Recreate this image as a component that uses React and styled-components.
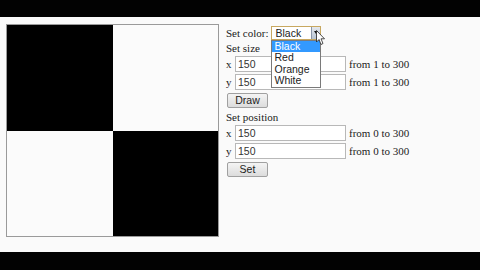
import React from 'react';
import styled, { createGlobalStyle } from 'styled-components';

const GlobalStyle = createGlobalStyle`
  html, body {
    margin: 0;
    padding: 0;
    background: #000;
  }
`;

const Page = styled.div`
  width: 480px;
  height: 270px;
  display: flex;
  flex-direction: column;
  overflow: hidden;
`;

const Bar = styled.div`
  height: ${p => p.h}px;
  background: #020202;
  flex-shrink: 0;
`;

const Content = styled.div`
  flex: 1;
  background: #fafafa;
  display: flex;
  align-items: flex-start;
  gap: 7px;
  padding: 7px 6px 0;
`;

const Canvas = styled.div`
  width: 211px;
  height: 211px;
  border: 1px solid #9a9a9a;
  display: grid;
  grid-template-columns: 106px 105px;
  grid-template-rows: 106px 105px;
  background: #fbfbfb;
`;

const Cell = styled.div`
  background: ${p => (p.dark ? '#000' : '#fbfbfb')};
`;

const Panel = styled.div`
  display: flex;
  flex-direction: column;
  font-family: "Liberation Serif", serif;
  font-size: 11px;
  color: #1a1a1a;
`;

const Row = styled.div`
  height: ${p => p.h}px;
  display: flex;
  align-items: center;
  position: relative;
`;

const Label = styled.span`
  width: ${p => (p.w ? `${p.w}px` : 'auto')};
  white-space: nowrap;
`;

const SelectBox = styled.div`
  position: relative;
  margin-left: 3px;
  width: 48px;
  height: 12px;
  border: 1px solid #c8a860;
  background: #fff;
  font-family: "Liberation Sans", Arial, sans-serif;
  font-size: 10.5px;
  line-height: 12px;
  color: #222;
`;

const SelectText = styled.span`
  padding-left: 3px;
`;

const Arrow = styled.div`
  position: absolute;
  right: 0;
  top: 0;
  width: 8px;
  height: 12px;
  background: linear-gradient(#e4e8ee, #b8c4d2);
  border-left: 1px solid #8a96a8;
  display: flex;
  align-items: center;
  justify-content: center;
  &::after {
    content: '';
    border-left: 2.5px solid transparent;
    border-right: 2.5px solid transparent;
    border-top: 3px solid #111;
  }
`;

const DropList = styled.div`
  position: absolute;
  left: -1px;
  top: 13px;
  width: 48px;
  border: 1px solid #7a7a7a;
  background: #fff;
  display: flex;
  flex-direction: column;
  z-index: 2;
`;

const Option = styled.div`
  height: 11.5px;
  line-height: 11.5px;
  padding-left: 2px;
  background: ${p => (p.active ? '#3399ff' : '#fff')};
  color: ${p => (p.active ? '#fff' : '#222')};
`;

const TextInput = styled.div`
  width: 107px;
  height: 14px;
  border: 1px solid #b8b8b8;
  background: #fff;
  font-family: "Liberation Sans", Arial, sans-serif;
  font-size: 10.5px;
  line-height: 14px;
  padding-left: 2px;
  color: #333;
  box-sizing: content-box;
`;

const Hint = styled.span`
  margin-left: 3px;
  white-space: nowrap;
`;

const Button = styled.div`
  margin-left: 1px;
  width: 39px;
  height: 13px;
  border: 1px solid #a0a0a0;
  border-radius: 2px;
  background: linear-gradient(#f4f4f4, #dcdcdc);
  font-family: "Liberation Sans", Arial, sans-serif;
  font-size: 10.5px;
  line-height: 13px;
  text-align: center;
  color: #222;
`;

const Cursor = styled.svg`
  position: absolute;
  left: 44px;
  top: 3px;
  z-index: 3;
`;

const InputRow = ({ axis, range }) => (
  <Row h={18}>
    <Label w={9}>{axis}</Label>
    <TextInput>150</TextInput>
    <Hint>from {range} to 300</Hint>
  </Row>
);

export default function App() {
  return (
    <Page>
      <GlobalStyle />
      <Bar h={17} />
      <Content>
        <Canvas>
          <Cell dark />
          <Cell />
          <Cell />
          <Cell dark />
        </Canvas>
        <Panel>
          <Row h={17}>
            <Label>Set color:</Label>
            <SelectBox>
              <SelectText>Black</SelectText>
              <Arrow />
              <DropList>
                <Option active>Black</Option>
                <Option>Red</Option>
                <Option>Orange</Option>
                <Option>White</Option>
              </DropList>
              <Cursor width="10" height="16" viewBox="0 0 10 16">
                <path d="M0.5 0.5 L0.5 12 L3 9.5 L5 14.5 L7 13.5 L5 8.8 L8.5 8.8 Z" fill="#fff" stroke="#222" strokeWidth="0.8" />
              </Cursor>
            </SelectBox>
          </Row>
          <Row h={14}><Label>Set size</Label></Row>
          <InputRow axis="x" range="1" />
          <InputRow axis="y" range="1" />
          <Row h={19}><Button>Draw</Button></Row>
          <Row h={14}><Label>Set position</Label></Row>
          <InputRow axis="x" range="0" />
          <InputRow axis="y" range="0" />
          <Row h={19}><Button>Set</Button></Row>
        </Panel>
      </Content>
      <Bar h={18} />
    </Page>
  );
}
